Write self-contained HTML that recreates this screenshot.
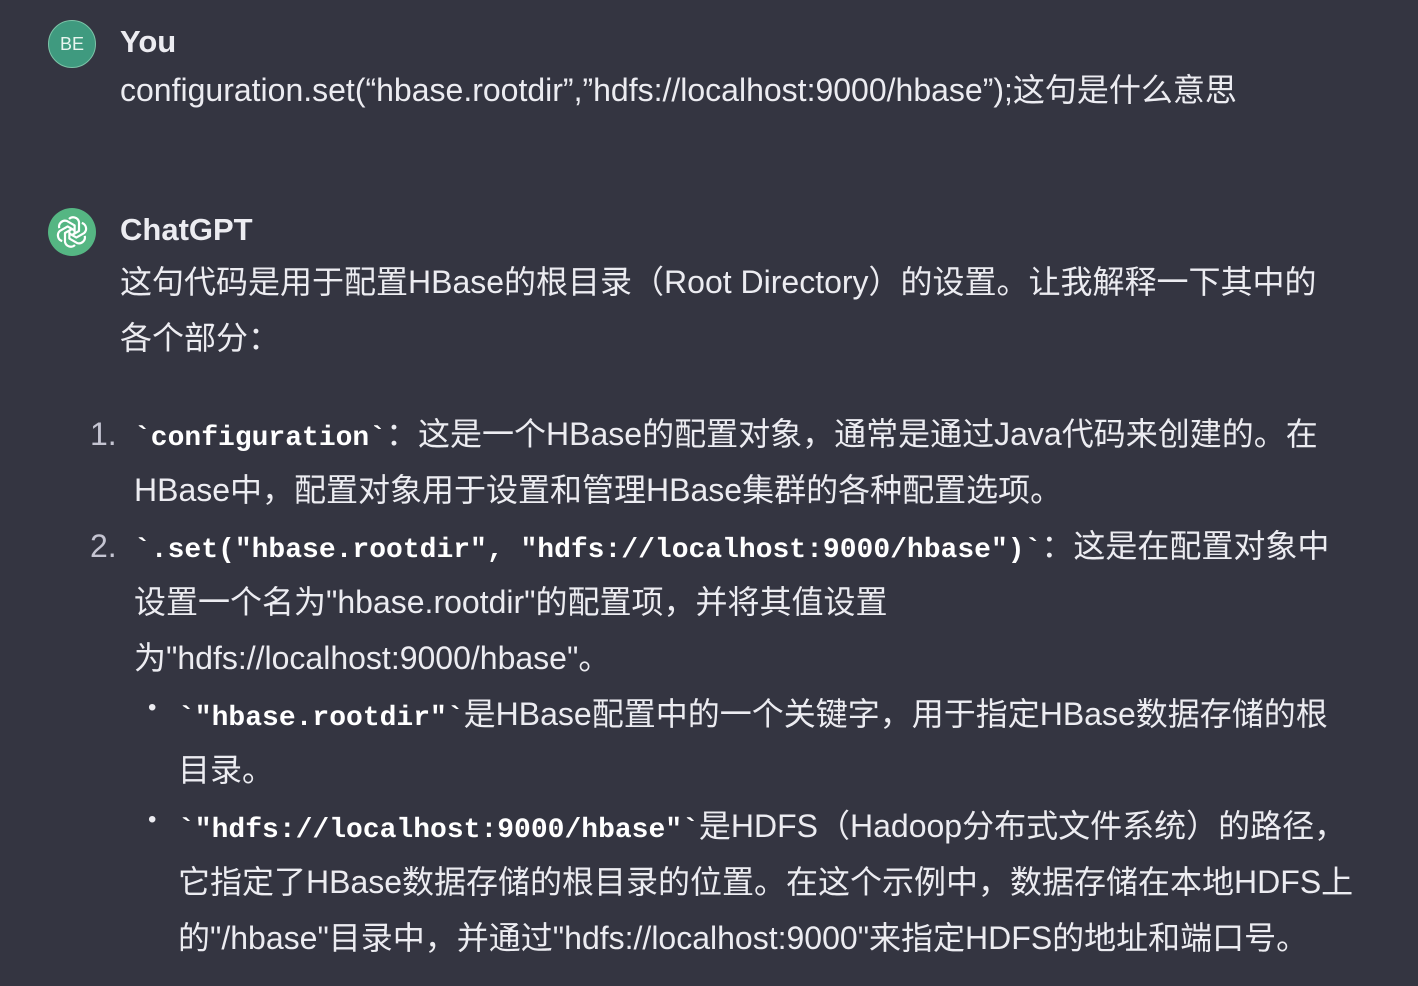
<!DOCTYPE html>
<html><head><meta charset="utf-8"><style>
html,body{margin:0;padding:0;}
body{width:1418px;height:986px;background:#343541;position:relative;overflow:hidden;color:#ececf1;font-family:"Liberation Sans","Noto Sans CJK SC",sans-serif;font-size:32px;}
.l{position:absolute;white-space:nowrap;height:56px;line-height:56px;}
.c{font-family:"Liberation Mono","DejaVu Sans Mono",monospace;font-weight:bold;font-size:28px;color:#fff;}
.n{color:#c5c5d2;}
.av{position:absolute;left:48px;width:48px;height:48px;border-radius:50%;}
.h{font-weight:bold;font-size:31px;}
</style></head><body>
<div class="av" style="top:20px;background:#3f9a7f;border:1px solid #7cc4a8;box-sizing:border-box;color:#e8f5ef;font-size:18px;text-align:center;line-height:46px;">BE</div>
<div class="l h" style="left:120px;top:14px;">You</div>
<div class="l" style="left:120px;top:62px;">configuration.set(“hbase.rootdir”,”hdfs://localhost:9000/hbase”);这句是什么意思</div>

<div class="av" style="top:208px;background:#55b683;">
<svg width="48" height="48" viewBox="0 0 48 48"><g fill="none" stroke="#fff" stroke-width="2.2" stroke-linejoin="round">
<g transform="translate(24 24)">
<path id="p" d="M-3 -13 a6 6 0 0 1 10 3 v9 l-7 4"/>
<use href="#p" transform="rotate(60)"/><use href="#p" transform="rotate(120)"/><use href="#p" transform="rotate(180)"/><use href="#p" transform="rotate(240)"/><use href="#p" transform="rotate(300)"/>
</g></g></svg></div>
<div class="l h" style="left:120px;top:202px;">ChatGPT</div>
<div class="l" style="left:120px;top:254px;">这句代码是用于配置HBase的根目录（Root Directory）的设置。让我解释一下其中的</div>
<div class="l" style="left:120px;top:310px;">各个部分：</div>

<div class="l n" style="left:90px;top:406px;">1.</div>
<div class="l" style="left:134px;top:406px;"><span class="c">`configuration`</span>：这是一个HBase的配置对象，通常是通过Java代码来创建的。在</div>
<div class="l" style="left:134px;top:462px;">HBase中，配置对象用于设置和管理HBase集群的各种配置选项。</div>
<div class="l n" style="left:90px;top:518px;">2.</div>
<div class="l" style="left:134px;top:518px;"><span class="c">`.set("hbase.rootdir", "hdfs://localhost:9000/hbase")`</span>：这是在配置对象中</div>
<div class="l" style="left:134px;top:574px;">设置一个名为"hbase.rootdir"的配置项，并将其值设置</div>
<div class="l" style="left:134px;top:630px;">为"hdfs://localhost:9000/hbase"。</div>
<div class="l" style="left:148px;top:680px;font-size:24px;">•</div>
<div class="l" style="left:178px;top:686px;"><span class="c">`"hbase.rootdir"`</span>是HBase配置中的一个关键字，用于指定HBase数据存储的根</div>
<div class="l" style="left:178px;top:742px;">目录。</div>
<div class="l" style="left:148px;top:792px;font-size:24px;">•</div>
<div class="l" style="left:178px;top:798px;"><span class="c">`"hdfs://localhost:9000/hbase"`</span>是HDFS（Hadoop分布式文件系统）的路径，</div>
<div class="l" style="left:178px;top:854px;">它指定了HBase数据存储的根目录的位置。在这个示例中，数据存储在本地HDFS上</div>
<div class="l" style="left:178px;top:910px;">的"/hbase"目录中，并通过"hdfs://localhost:9000"来指定HDFS的地址和端口号。</div>
</body></html>
